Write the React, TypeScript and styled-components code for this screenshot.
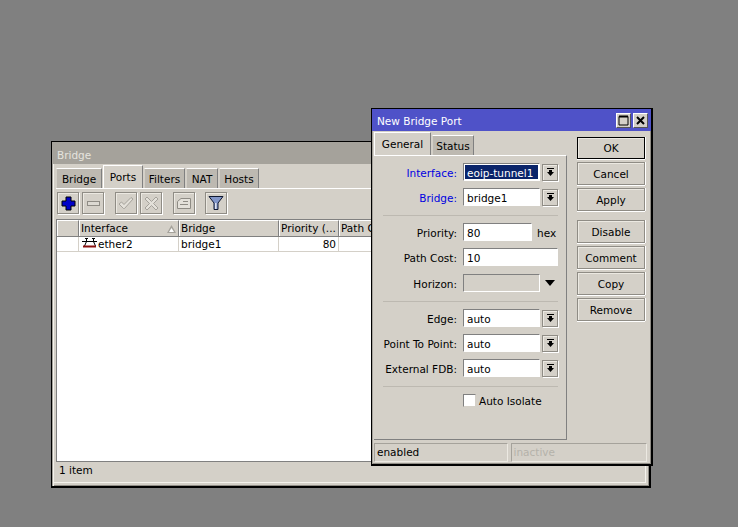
import styled, { createGlobalStyle } from 'styled-components';

const GlobalStyle = createGlobalStyle`
  html, body {
    margin: 0;
    height: 100%;
    background: #808080;
  }
  body {
    font-family: "DejaVu Sans", Verdana, sans-serif;
    font-size: 10.5px;
    color: #000;
  }
`;

const Desktop = styled.div`
  position: relative;
  width: 738px;
  height: 527px;
  overflow: hidden;
  background: #808080;
`;

const BridgeWindow = styled.div`
  position: absolute;
  left: 51px;
  top: 141px;
  width: 600px;
  height: 347px;
  box-sizing: border-box;
  border: 1px solid #000;
  border-width: 1px 2px 2px 1px;
  background: #d4d0c8;
  box-shadow: inset 1px 1px #a5a29b, inset 2px 2px #f4f2ec, inset -1px -1px #8f8c85, inset -3px -3px #d4d0c8, inset -4px -4px #f4f2ec;
  display: flex;
  flex-direction: column;
`;

const PortWindow = styled.div`
  position: absolute;
  left: 371px;
  top: 108px;
  width: 282px;
  height: 358px;
  box-sizing: border-box;
  border: 1px solid #000;
  border-width: 1px 2px 2px 1px;
  background: #d4d0c8;
  box-shadow: inset 1px 1px #a5a29b, inset -1px -1px #8f8c85;
  display: flex;
  flex-direction: column;
`;

const TitleBar = styled.div<{ $active?: boolean }>`
  height: 22px;
  flex: none;
  box-sizing: border-box;
  display: flex;
  align-items: center;
  justify-content: space-between;
  padding: ${(p) => (p.$active ? 0 : 3)}px 3px 0 5px;
  color: ${(p) => (p.$active ? '#fff' : '#e6e4de')};
  background: ${(p) => (p.$active ? '#4f52c8' : '#a5a29b')};
`;

const TitleText = styled.span`
  padding-top: 2px;
`;

const TitleButtons = styled.div`
  display: flex;
  gap: 2px;
`;

const TitleButton = styled.div`
  width: 15px;
  height: 15px;
  box-sizing: border-box;
  border: 1px solid #fff;
  border-right-color: #555;
  border-bottom-color: #555;
  background: #d4d0c8;
  display: flex;
  align-items: center;
  justify-content: center;
`;

const TabStrip = styled.div<{ $left: number; $top: number }>`
  display: flex;
  align-items: flex-end;
  flex: none;
  padding: ${(p) => p.$top}px 0 0 ${(p) => p.$left}px;
`;

const Tab = styled.div<{ $active?: boolean; $width: number }>`
  width: ${(p) => p.$width}px;
  height: ${(p) => (p.$active ? 23 : 20)}px;
  box-sizing: border-box;
  display: flex;
  align-items: center;
  justify-content: center;
  margin-right: 1px;
  padding-top: ${(p) => (p.$active ? 0 : 1)}px;
  background: ${(p) => (p.$active ? '#d4d0c8' : '#bdb9b1')};
  border-top: 1px solid #fff;
  border-left: 1px solid ${(p) => (p.$active ? '#fff' : '#d4d0c8')};
  border-right: 1px solid #808080;
`;

const TabBody = styled.div`
  flex: 1;
  min-height: 0;
  margin-left: 4px;
  border-top: 1px solid #fff;
  display: flex;
  flex-direction: column;
`;

const Toolbar = styled.div`
  display: flex;
  align-items: flex-start;
  box-sizing: border-box;
  height: 30px;
  padding: 3px 0 0 1px;
  flex: none;
`;

const ToolButton = styled.div<{ $gap?: number }>`
  width: 22px;
  height: 22px;
  box-sizing: border-box;
  margin-left: ${(p) => p.$gap ?? 0}px;
  border: 1px solid #8f8c85;
  box-shadow: 1px 1px #fff, inset 1px 1px #ece9e2;
  display: flex;
  align-items: center;
  justify-content: center;
`;

const Table = styled.div`
  flex: 1;
  min-height: 0;
  margin-right: 2px;
  background: #fff;
  border-top: 1px solid #808080;
  border-left: 1px solid #808080;
  border-bottom: 1px solid #808080;
  overflow: hidden;
`;

const TableRow = styled.div<{ $head?: boolean }>`
  display: grid;
  grid-template-columns: 22px 100px 100px 60px 1fr;
  height: ${(p) => (p.$head ? 16 : 14)}px;
  background: ${(p) => (p.$head ? '#d4d0c8' : '#fff')};
  border-bottom: 1px solid ${(p) => (p.$head ? '#808080' : '#d4d0c8')};
`;

const Cell = styled.div<{ $right?: boolean; $head?: boolean }>`
  position: relative;
  box-sizing: border-box;
  display: flex;
  align-items: center;
  justify-content: ${(p) => (p.$right ? 'flex-end' : 'flex-start')};
  padding: 0 ${(p) => (p.$head ? 1 : 2)}px 1px;
  white-space: nowrap;
  overflow: hidden;
  border-right: 1px solid ${(p) => (p.$head ? '#808080' : '#d4d0c8')};
  ${(p) => p.$head && 'border-top: 1px solid #fff; border-left: 1px solid #fff;'}
`;

const SortMark = styled.svg`
  position: absolute;
  right: 2px;
  top: 4px;
`;

const PortIcon = styled.svg`
  flex: none;
  margin: -1px 1px 0 1px;
`;

const StatusBar = styled.div`
  height: 24px;
  flex: none;
  box-sizing: border-box;
  padding: 2px 0 0 3px;
`;

const DialogBody = styled.div`
  flex: 1;
  min-height: 0;
  display: flex;
  padding: 1px 0 0 2px;
`;

const DialogLeft = styled.div`
  width: 193px;
  flex: none;
  display: flex;
  flex-direction: column;
`;

const Form = styled.div`
  width: 193px;
  height: 285px;
  box-sizing: border-box;
  border-top: 1px solid #fff;
  border-right: 1px solid #808080;
  border-bottom: 1px solid #808080;
  padding: 7px 8px 0 9px;
`;

const Section = styled.div`
  display: flex;
  flex-direction: column;
  gap: 7px;
`;

const Divider = styled.div<{ $before: number; $after: number }>`
  height: 1px;
  background: #bdb9b1;
  margin: ${(p) => p.$before}px 0 ${(p) => p.$after}px;
`;

const Row = styled.div<{ $gap?: number }>`
  display: flex;
  align-items: center;
  height: 18px;
  margin-top: ${(p) => p.$gap ?? 0}px;
`;

const Label = styled.label<{ $accent?: boolean }>`
  width: 74px;
  flex: none;
  margin-right: 6px;
  padding-top: 1px;
  white-space: nowrap;
  display: flex;
  justify-content: flex-end;
  color: ${(p) => (p.$accent ? '#0000e0' : '#000')};
`;

const Field = styled.div<{ $width: number; $disabled?: boolean }>`
  width: ${(p) => p.$width}px;
  height: 18px;
  box-sizing: border-box;
  flex: none;
  display: flex;
  align-items: center;
  padding: 1px 0 0 3px;
  background: ${(p) => (p.$disabled ? '#d4d0c8' : '#fff')};
  border: 1px solid #808080;
  border-right-color: #fff;
  border-bottom-color: #fff;
`;

const SelectedField = styled(Field)`
  padding: 1px;
`;

const Selected = styled.span`
  flex: 1;
  align-self: stretch;
  display: flex;
  align-items: center;
  background: #0a246a;
  color: #fff;
  padding: 1px 0 0 2px;
  white-space: nowrap;
`;

const DropButton = styled.div`
  width: 16px;
  height: 17px;
  box-sizing: border-box;
  flex: none;
  margin-left: 2px;
  border: 1px solid #8f8c85;
  box-shadow: 1px 1px #fff, inset 1px 1px #ece9e2;
  display: flex;
  align-items: center;
  justify-content: center;
`;

const PlainArrow = styled.svg`
  flex: none;
  margin-left: 5px;
`;

const Unit = styled.span`
  margin-left: 5px;
  padding-top: 1px;
`;

const CheckRow = styled.div`
  display: flex;
  align-items: center;
  gap: 3px;
  margin-left: 80px;
`;

const CheckBox = styled.div`
  width: 13px;
  height: 13px;
  box-sizing: border-box;
  background: #fff;
  border: 1px solid #808080;
  border-right-color: #d4d0c8;
  border-bottom-color: #d4d0c8;
`;

const DialogStatus = styled.div`
  display: flex;
  gap: 3px;
  margin-top: 3px;
  height: 19px;
  width: 273px;
  flex: none;
`;

const StatusCell = styled.div<{ $width: number; $muted?: boolean }>`
  width: ${(p) => p.$width}px;
  box-sizing: border-box;
  padding: 0 0 1px 2px;
  display: flex;
  align-items: center;
  color: ${(p) => (p.$muted ? '#b5b2aa' : '#000')};
  border: 1px solid #a5a29b;
  border-right-color: #ece9e2;
  border-bottom-color: #ece9e2;
`;

const ButtonColumn = styled.div`
  display: flex;
  flex-direction: column;
  gap: 3px;
  margin-left: 10px;
  padding-top: 5px;
`;

const ActionButton = styled.div<{ $primary?: boolean; $gap?: number }>`
  width: 68px;
  height: ${(p) => (p.$primary ? 22 : 23)}px;
  box-sizing: border-box;
  margin-top: ${(p) => p.$gap ?? 0}px;
  display: flex;
  align-items: center;
  justify-content: center;
  border: 1px solid ${(p) => (p.$primary ? '#000' : '#8f8c85')};
  box-shadow: 0 1px #fff, 1px 0 #fff, inset 1px 1px #ece9e2;
`;

function DropIcon() {
  return (
    <svg width="9" height="9" viewBox="0 0 9 9">
      <path d="M1 0h7v1H1z M3 2h3v2h2L4.500 8 1 4h2z" fill="#000" />
    </svg>
  );
}

function PortGlyph() {
  return (
    <PortIcon width="15" height="10" viewBox="0 0 15 10">
      <path d="M3 .500h3M10 .500h3M4.500 0v3.500M11.500 0v3.500M0 3.500h15M4.500 3.500L2.500 8M11.500 3.500l2 4.500" stroke="#000" fill="none" />
      <path d="M1 8.500h13" stroke="#8a1010" strokeWidth="2" fill="none" />
    </PortIcon>
  );
}

export default function App() {
  return (
    <>
      <GlobalStyle />
      <Desktop>
        <BridgeWindow>
          <TitleBar>Bridge</TitleBar>
          <TabStrip $left={4} $top={1}>
            <Tab $width={46}>Bridge</Tab>
            <Tab $width={40} $active>Ports</Tab>
            <Tab $width={41}>Filters</Tab>
            <Tab $width={32}>NAT</Tab>
            <Tab $width={40}>Hosts</Tab>
          </TabStrip>
          <TabBody>
            <Toolbar>
              <ToolButton>
                <svg width="15" height="15" viewBox="0 0 15 15">
                  <path d="M5 1h5v4h4v5h-4v4H5v-4H1V5h4z" fill="#0000c8" stroke="#000" />
                </svg>
              </ToolButton>
              <ToolButton $gap={3}>
                <svg width="15" height="7" viewBox="0 0 15 7">
                  <rect x="1.500" y="1.500" width="12" height="4" fill="#dcd9d2" stroke="#8f8c85" />
                </svg>
              </ToolButton>
              <ToolButton $gap={11}>
                <svg width="16" height="14" viewBox="0 0 16 14">
                  <path d="M1 8l2.500-2 2.500 2.500L13 1.500l2 1.500L6.500 12.500H5.500z" fill="#e4e1da" stroke="#a5a29b" />
                </svg>
              </ToolButton>
              <ToolButton $gap={3}>
                <svg width="15" height="15" viewBox="0 0 15 15">
                  <path d="M3 1l4.500 4.500L12 1l2 2-4.500 4.500L14 12l-2 2-4.500-4.500L3 14l-2-2 4.500-4.500L1 3z" fill="#e4e1da" stroke="#a5a29b" />
                </svg>
              </ToolButton>
              <ToolButton $gap={11}>
                <svg width="16" height="13" viewBox="0 0 16 13">
                  <path d="M1.500 4.500L5 1.500h9.500v10h-13z" fill="#e4e1da" stroke="#8f8c85" />
                  <path d="M7 4.500h5M4 7.500h8" stroke="#8f8c85" fill="none" />
                </svg>
              </ToolButton>
              <ToolButton $gap={10}>
                <svg width="16" height="16" viewBox="0 0 16 16">
                  <path d="M1 1.500h14L10 8v6.500H6V8z" fill="#8296c8" stroke="#101830" />
                  <path d="M7 8v6h1.500V8z" fill="#dfe4f0" />
                </svg>
              </ToolButton>
            </Toolbar>
            <Table>
              <TableRow $head>
                <Cell $head />
                <Cell $head>
                  Interface
                  <SortMark width="9" height="8" viewBox="0 0 9 8">
                    <path d="M4.500 0L9 8H0z" fill="#a5a29b" />
                    <path d="M4.500 3L7 7H2z" fill="#fff" />
                  </SortMark>
                </Cell>
                <Cell $head>Bridge</Cell>
                <Cell $head>Priority (...</Cell>
                <Cell $head>Path Cost</Cell>
              </TableRow>
              <TableRow>
                <Cell />
                <Cell>
                  <PortGlyph />
                  ether2
                </Cell>
                <Cell>bridge1</Cell>
                <Cell $right>80</Cell>
                <Cell />
              </TableRow>
            </Table>
            <StatusBar>1 item</StatusBar>
          </TabBody>
        </BridgeWindow>

        <PortWindow>
          <TitleBar $active>
            <TitleText>New Bridge Port</TitleText>
            <TitleButtons>
              <TitleButton>
                <svg width="11" height="11" viewBox="0 0 11 11">
                  <path d="M1 1.500h9v8.500H1z" fill="none" stroke="#000" />
                  <path d="M1 1.500h9" stroke="#000" strokeWidth="2" />
                </svg>
              </TitleButton>
              <TitleButton>
                <svg width="9" height="9" viewBox="0 0 9 9">
                  <path d="M1 1l7 7M8 1L1 8" stroke="#000" strokeWidth="2" />
                </svg>
              </TitleButton>
            </TitleButtons>
          </TitleBar>
          <DialogBody>
            <DialogLeft>
              <TabStrip $left={0} $top={0}>
                <Tab $width={57} $active>General</Tab>
                <Tab $width={42}>Status</Tab>
              </TabStrip>
              <Form>
                <Section>
                  <Row>
                    <Label $accent>Interface:</Label>
                    <SelectedField $width={77}><Selected>eoip-tunnel1</Selected></SelectedField>
                    <DropButton><DropIcon /></DropButton>
                  </Row>
                  <Row>
                    <Label $accent>Bridge:</Label>
                    <Field $width={77}>bridge1</Field>
                    <DropButton><DropIcon /></DropButton>
                  </Row>
                </Section>
                <Divider $before={9} $after={7} />
                <Section>
                  <Row>
                    <Label>Priority:</Label>
                    <Field $width={69}>80</Field>
                    <Unit>hex</Unit>
                  </Row>
                  <Row>
                    <Label>Path Cost:</Label>
                    <Field $width={95}>10</Field>
                  </Row>
                  <Row $gap={1}>
                    <Label>Horizon:</Label>
                    <Field $width={77} $disabled />
                    <PlainArrow width="10" height="6" viewBox="0 0 10 6">
                      <path d="M0 0h10L5 6z" fill="#000" />
                    </PlainArrow>
                  </Row>
                </Section>
                <Divider $before={9} $after={7} />
                <Section>
                  <Row>
                    <Label>Edge:</Label>
                    <Field $width={77}>auto</Field>
                    <DropButton><DropIcon /></DropButton>
                  </Row>
                  <Row>
                    <Label>Point To Point:</Label>
                    <Field $width={77}>auto</Field>
                    <DropButton><DropIcon /></DropButton>
                  </Row>
                  <Row>
                    <Label>External FDB:</Label>
                    <Field $width={77}>auto</Field>
                    <DropButton><DropIcon /></DropButton>
                  </Row>
                </Section>
                <Divider $before={9} $after={7} />
                <CheckRow>
                  <CheckBox />
                  Auto Isolate
                </CheckRow>
              </Form>
              <DialogStatus>
                <StatusCell $width={134}>enabled</StatusCell>
                <StatusCell $width={137} $muted>inactive</StatusCell>
              </DialogStatus>
            </DialogLeft>
            <ButtonColumn>
              <ActionButton $primary>OK</ActionButton>
              <ActionButton>Cancel</ActionButton>
              <ActionButton>Apply</ActionButton>
              <ActionButton $gap={6}>Disable</ActionButton>
              <ActionButton>Comment</ActionButton>
              <ActionButton>Copy</ActionButton>
              <ActionButton>Remove</ActionButton>
            </ButtonColumn>
          </DialogBody>
        </PortWindow>
      </Desktop>
    </>
  );
}
